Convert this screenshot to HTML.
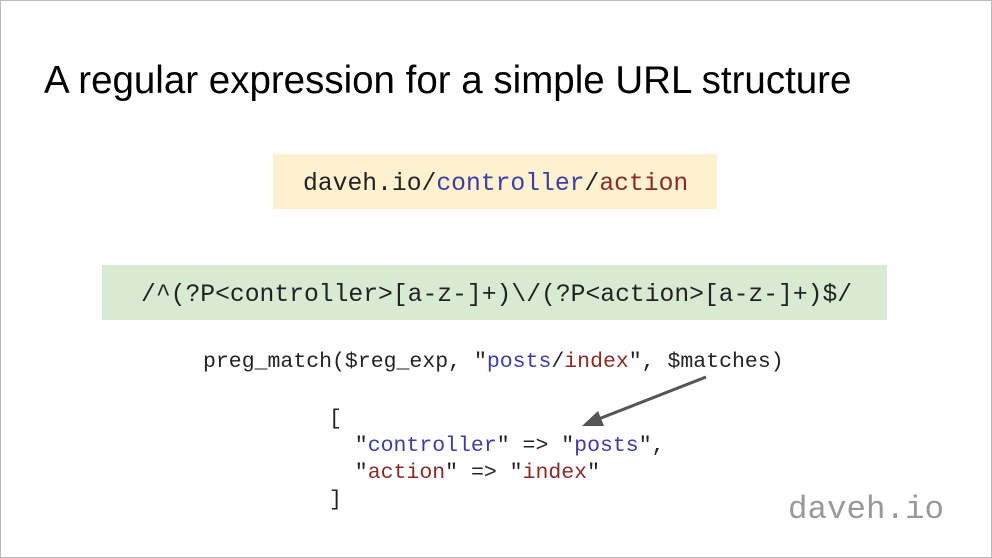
<!DOCTYPE html>
<html><head><style>
body{margin:0;width:992px;height:558px;background:#fff;position:relative;overflow:hidden;font-family:"Liberation Mono",monospace}
.frame{position:absolute;left:0;top:0;width:990px;height:556px;border:1px solid #bbb}
.t{position:absolute;white-space:pre;line-height:1}
.b{color:#3c3caa}.r{color:#8b2a24}
</style></head><body>
<div class="frame"></div>
<div class="t" style="left:44px;top:62px;font-family:'Liberation Sans',sans-serif;font-size:38.5px;color:#000">A regular expression for a simple URL structure</div>
<div style="position:absolute;left:273px;top:154px;width:444px;height:55px;background:#fdf1cf"></div>
<div class="t" style="left:303px;top:172px;font-size:24.7px;color:#222">daveh.io/<span class="b">controller</span>/<span class="r">action</span></div>
<div style="position:absolute;left:102px;top:265px;width:785px;height:55px;background:#d9ead3"></div>
<div class="t" style="left:141px;top:283px;font-size:24.7px;color:#222">/^(?P&lt;controller&gt;[a-z-]+)\/(?P&lt;action&gt;[a-z-]+)$/</div>
<div class="t" style="left:203px;top:352px;font-size:21.5px;color:#222">preg_match($reg_exp, "<span class="b">posts</span>/<span class="r">index</span>", $matches)</div>
<div class="t" style="left:329px;top:406px;font-size:21.5px;color:#222;line-height:27px">[
  "<span class="b">controller</span>" =&gt; "<span class="b">posts</span>",
  "<span class="r">action</span>" =&gt; "<span class="r">index</span>"
]</div>
<svg style="position:absolute;left:0;top:0" width="992" height="558">
<line x1="706" y1="377" x2="596" y2="420" stroke="#555" stroke-width="3"/>
<polygon points="582,426 598,411 604,426" fill="#555"/>
</svg>
<div class="t" style="left:788px;top:494px;font-size:32.5px;color:#999">daveh.io</div>
</body></html>
